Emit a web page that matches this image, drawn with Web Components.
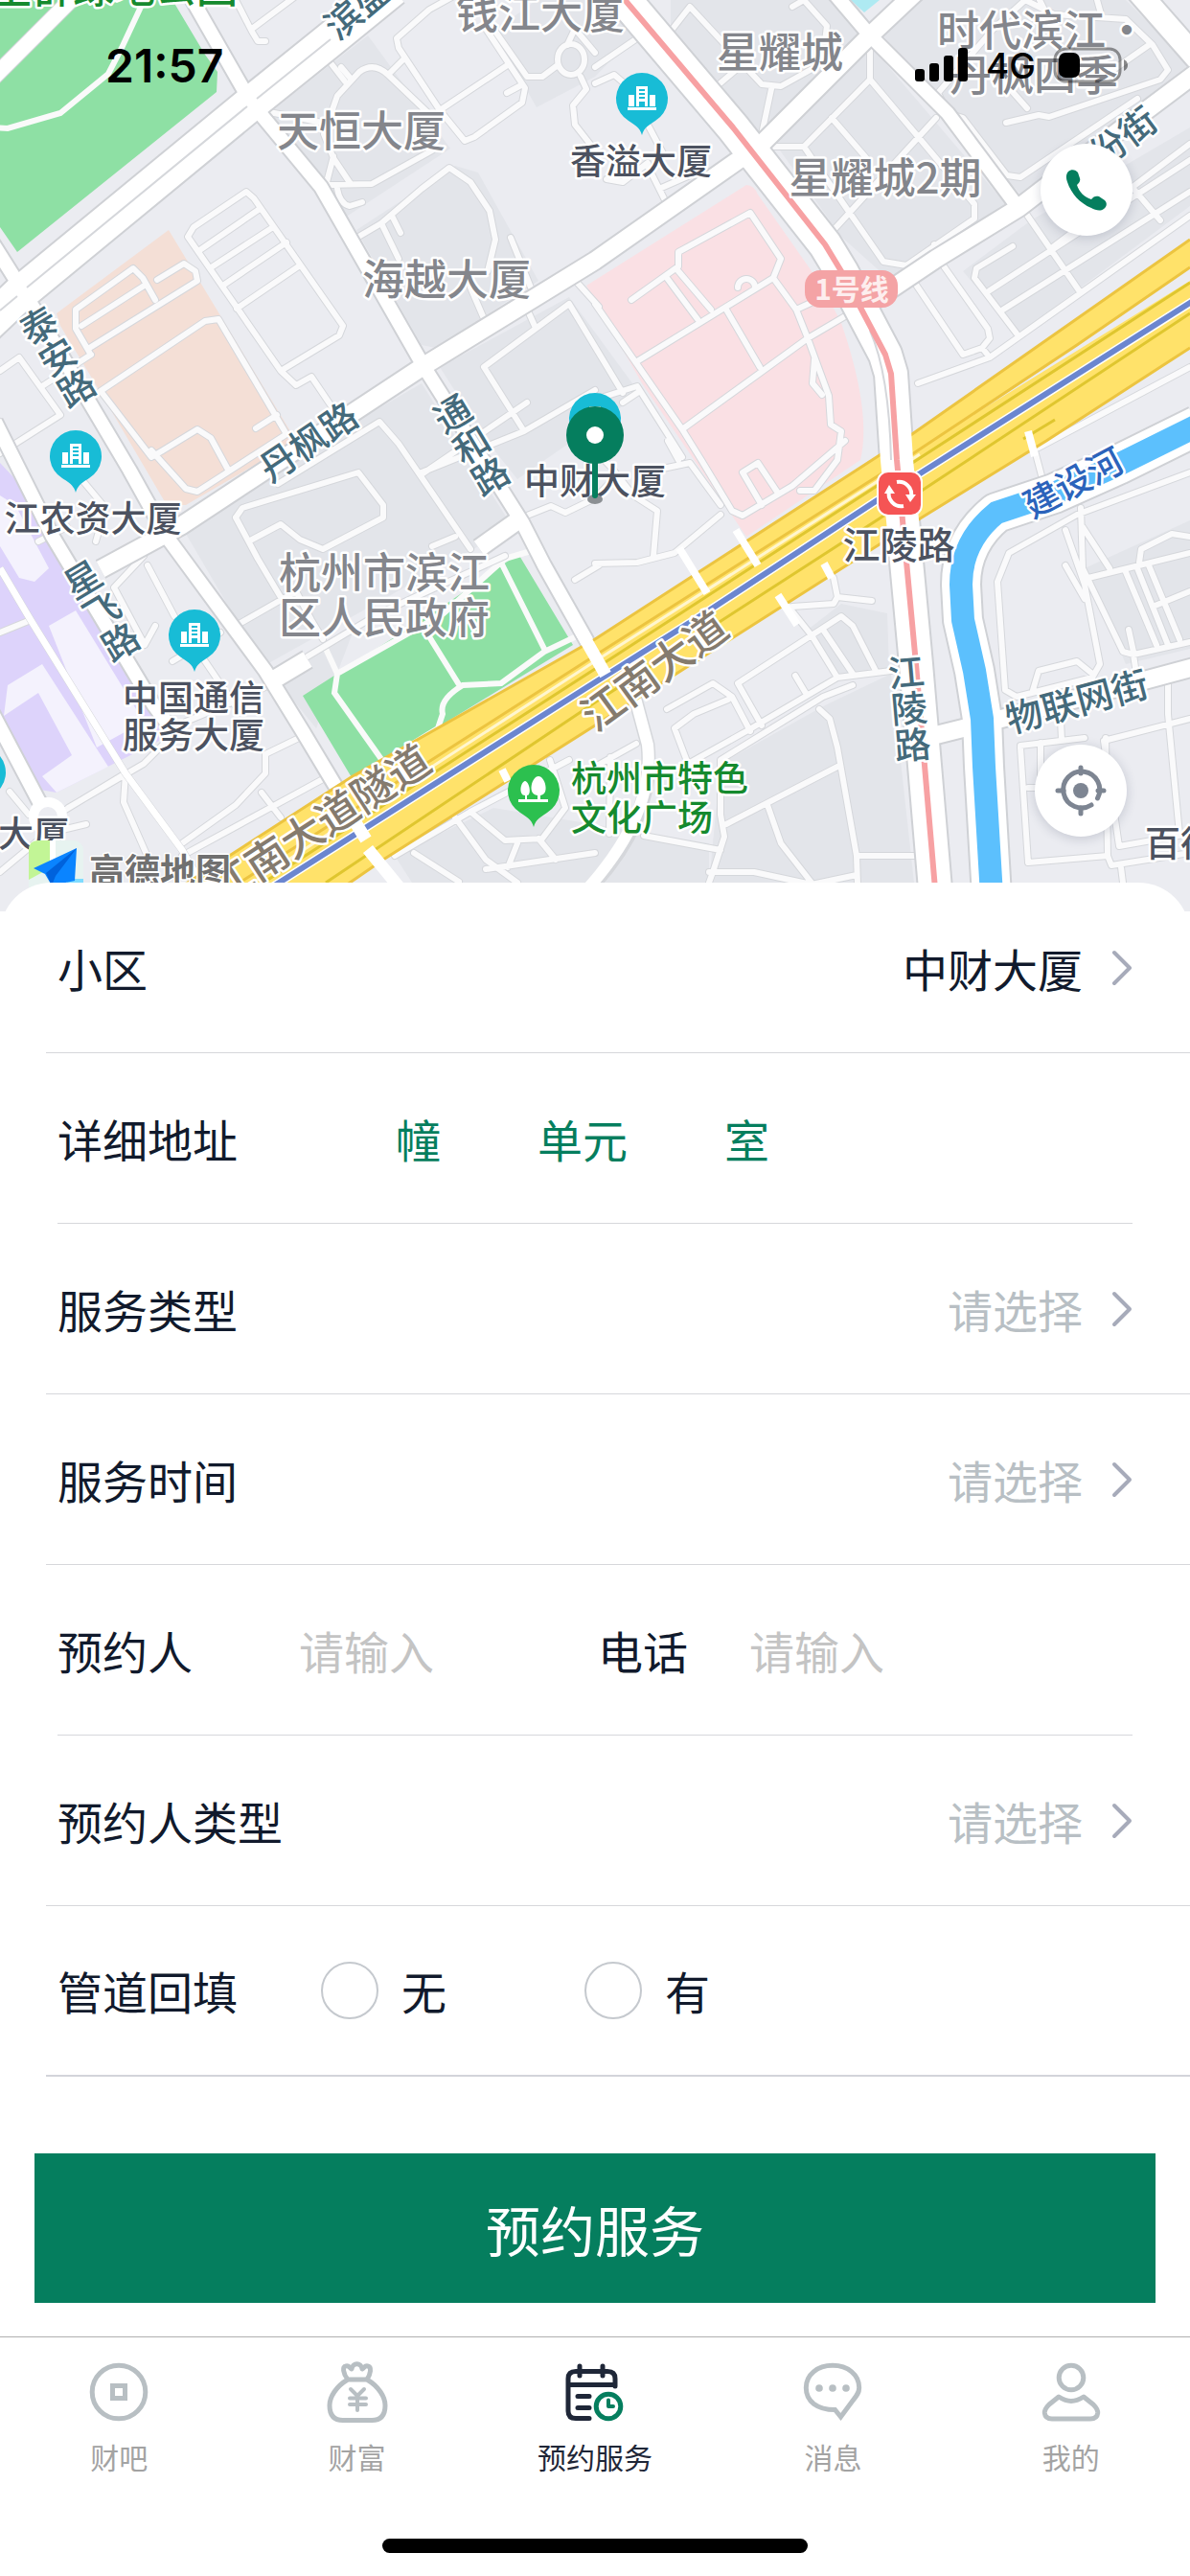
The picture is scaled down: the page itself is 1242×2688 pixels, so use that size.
<!DOCTYPE html>
<html lang="zh-CN">
<head>
<meta charset="utf-8">
<meta name="viewport" content="width=device-width, initial-scale=1">
<title>预约服务</title>
<style>
body {
    margin: 0;
    background: #fff;
    color: #111a2c;
    font-family: "Noto Sans CJK SC", sans-serif;
}
</style>
</head>
<body>
<booking-page></booking-page>

<template id="map-template">
<style>
:host {
    display: block;
    position: relative;
    aspect-ratio: 1242 / 951;
    overflow: hidden;
    background: #ebecf1;
}
.map {
    display: block;
    width: 100%;
    height: 100%;
}
.map text {
    font-weight: 500;
    text-anchor: middle;
    paint-order: stroke;
    stroke: #fff;
    stroke-width: 5px;
    stroke-linejoin: round;
}
.map .area { font-size: 44px; fill: #84868c; }
.map .poi { font-size: 37px; fill: #4c5260; }
.map .station { font-size: 39px; fill: #4c5260; }
.map .road { font-size: 38px; fill: #446a7b; }
.map .down { writing-mode: vertical-rl; }
.map .avenue { font-size: 44px; fill: #857b6e; }
.map .water { font-size: 37px; fill: #2b63bb; }
.map .park { font-size: 37px; fill: #158a2e; }
.map .start { text-anchor: start; }
.map .line { font-size: 30px; font-weight: 700; fill: #fdeeee; stroke: none; }
.map .brand { font-size: 37px; font-weight: 700; fill: #707070; stroke-width: 3px; }
.round {
    position: absolute;
    right: 60px;
    display: grid;
    place-items: center;
    width: 96px;
    height: 96px;
    padding: 0;
    border: 0;
    border-radius: 50%;
    background: #fff;
    box-shadow: 0 2px 12px rgba(40, 50, 80, .2);
}
.call { top: 150px; }
.locate { bottom: 78px; right: 66px; }
</style>
<svg class="map" viewBox="0 0 1242 951" preserveAspectRatio="xMidYMin slice" role="img" aria-label="地图">
    <defs>
        <path id="small" fill="none" stroke-linejoin="round" stroke-linecap="round" d="
            M246,0 L263,33 269,43 277,43 M263,30 L310,-5 M343,63 L360,85 M447,118 L405,78 Q390,64 375,75 L352,100 338,140 348,165 366,192
            M337,193 L388,192 451,157 M348,163 L341,190 331,197 M352,197 Q355,213 365,215 L378,211 M281,117 L337,128
            M459,115 L416,50 414,40 448,10 475,-5 M406,77 L421,62 M459,115 L531,67 M507,30 L548,92 545,107 495,143 485,147 459,115 M529,97 L542,90
            M366,82 L356,70 M515,30 L550,80 566,80 582,68 M582,62 a14,16 0 1 0 28,0 a14,16 0 1 0 -28,0 M606,80 L612,93 598,110 600,130 618,153 M592,47 L600,30 621,55
            M364,253 L398,233 440,197 469,175 491,190 511,220 517,250 509,283 M398,233 L416,270 M410,227 L418,243 M491,300 L507,337 M533,248 L554,300
            M293,387 L196,247 202,237 257,200 265,207 358,340 354,350 293,387 309,402 325,393 348,427 M210,260 L271,218 M222,278 L285,237 M234,297 L299,253 M247,322 L313,277
            M93,367 L79,343 79,323 139,280 149,290 162,313 M85,340 L152,297 M95,362 L206,293 204,283 192,275 164,292 M105,408 L214,335 228,333 299,453
            M105,408 L158,477 170,470 206,448 220,457 238,490 M158,470 L194,510 206,513 299,453 M267,447 L289,433 M44,403 L95,370
            M0,387 L20,373 63,433 0,473 M0,440 L20,480 M549,320 L558,340 M505,383 L594,317 650,410 M505,383 L547,450 M440,493 L547,450 621,407
            M598,290 L625,320 M290,505 L396,440 416,463 491,573 M246,540 L253,530 374,493 400,527 400,540 337,573 313,563 293,547 L263,563
            M246,540 L269,583 297,630 M246,653 L309,617 325,647 337,667 M451,570 L475,560 M321,685 L396,640 527,580 M440,495 L550,420
            M150,580 L119,613 151,673 162,653 M154,590 L182,643 M214,690 L246,737 M71,843 L150,797 194,753 242,733 285,713 M230,660 L180,690
            M277,787 L277,807 246,840 190,880 M277,787 L312,770 M273,827 L293,853 M190,893 L337,813 M131,807 L129,837 166,921 M0,910 L48,870 90,860 M60,850 L131,807 M10,826 L30,850
            M545,540 L575,528 590,535 621,520 640,500 M600,605 L625,590 M85,500 L110,530 100,565 M40,565 L70,550
            M696,213 L676,173 M633,187 L650,190 676,170 M676,130 L692,160 M688,197 L720,183 M621,87 L641,78 655,90 M621,70 L665,40
            M702,30 L720,7 795,88 815,90 851,70 M748,90 L768,73 M795,140 L805,93 M827,7 L839,0 863,27 861,43
            M908,43 L908,83 839,153 807,153 M908,83 L956,140 1017,213 1017,228 946,277 922,273 839,153 M977,123 L870,240 M868,123 L906,167 M975,255 L981,273
            M989,118 L1005,123 1051,183 1065,185 1187,103 M989,118 L979,97 1037,30 1070,0 1100,15 1175,20 1203,47 1219,73 1211,83 1095,122 1084,120 1050,128 M1072,113 L1049,87 M1156,77 L1199,47
            M1085,0 L1095,20 M1145,0 L1150,18 M956,297 L1005,370 1025,363 1033,353 1031,343 983,275 M1025,363 L1033,373 M958,400 L1033,373 1242,225 M1061,348 L1017,290 1019,280 1057,257
            M1069,220 L1126,303 M1033,303 L1242,167 M1047,323 L1242,200 M1096,260 L1242,150 M1183,197 L1211,230
            M659,313 L708,278 708,263 783,222 815,270 807,290 665,377 M696,290 L728,333 M708,283 L742,323 M621,317 L712,448 732,480 764,533 775,538 827,507 882,460 M758,323 L793,383
            M712,448 L843,353 882,330 M807,290 L831,323 843,353 865,413 867,443 878,450 874,480 850,512 835,512 M831,323 L870,305 M775,493 L791,483 811,513 M775,493 L795,527
            M850,375 L848,400 858,412 M770,300 a9,9 0 1 1 18,0 M621,417 L665,403 712,477 M650,420 L665,410 M697,460 L708,480
            M621,588 L665,587 704,577 752,537 M661,517 L686,533 682,580 M621,470 L640,490 661,517 M687,490 L720,483 752,527
            M1084,467 L1242,383 M1076,455 L1088,500 M1242,493 L1124,537 1053,577 1041,607 1049,720 1061,727 1140,707 1148,693 1132,610 1112,553 M1128,530 L1130,593 1172,680 1183,683 1242,670
            M1136,603 L1242,577 M1130,550 L1158,593 M1175,597 L1207,673 M1187,593 L1219,673 M1199,590 L1231,667 M1203,633 L1242,617 M1189,587 L1191,573 1223,557 1242,560 M1078,720 L1084,700 1124,690 1140,703
            M1112,590 L1132,625 M1183,683 L1187,710 M1178,657 L1183,680 M1065,780 L1073,900 1156,893 1154,770 M1065,778 L1132,770 M1086,775 L1086,810 M1073,822 L1090,822 M1242,750 L1152,773 1168,883 1242,870
            M1156,893 L1160,903 1242,890 M1170,905 L1172,921 M1219,710 L1219,745 1231,870 M1107,750 L1108,772
            M815,623 L847,663 874,707 930,700 M827,633 L870,630 874,623 910,627 M870,603 L874,623 M847,663 L878,643 890,653 914,700 M859,657 L890,703 M847,663 L770,713 795,757
            M830,705 L842,725 M696,740 L744,713 764,727 783,763 M874,707 L779,763 718,797 704,760 724,745 760,730 M890,715 L859,727 752,793 752,850 756,873 744,910 740,921
            M855,740 L866,750 874,780 894,893 896,951 M874,800 L758,860 M801,840 L815,880 847,921 M672,872 L752,887 M894,893 L958,893 M740,910 L787,910 847,923 894,913
            M412,893 L491,847 594,793 M475,853 L507,897 540,921 M491,847 L527,877 566,875 590,843 574,793 M432,890 L479,920 M507,907 L621,890 M540,880 L530,905 M562,875 L580,897
            M621,800 L664,776 M637,790 L636,870 M0,660 L32,647"/>
        <path id="medium" fill="none" stroke-linejoin="round" d="
            M195,-10 L262,107 335,195 442,382 545,545 568,590 612,668 630,706 M-10,250 L36,323 135,490 174,560 277,700 317,765 350,820
            M-5,440 L55,560 160,735 180,762 M-10,740 L48,850 M868,-10 L908,37 989,118 1063,217"/>
        <path id="large" fill="none" stroke-linejoin="round" d="
            M960,-12 L908,37 795,150 621,272 442,382 190,548 105,594 M895,325 L977,270 1063,217 1150,150 1250,75 M281,712 L321,688 M500,572 L545,540 M965,770 L1053,748 1250,695"/>
        <path id="metro" fill="none" stroke-linejoin="round" d="M648,-5 L765,133 861,255 878,283 924,370 930,390 936,480 942,543 956,693 978,951"/>
        <path id="river" fill="none" stroke-linejoin="round" d="M1250,444 L1167,485 1100,515 1040,535 Q1003,565 1003,610 L1005,647 1017,700 1025,750 1027,800 1036,951"/>
        <g id="tower-pin">
            <path fill="#18bcd6" d="M0,38 C-2,30 -8,27 -14,23 A27,27 0 1 1 14,23 C8,27 2,30 0,38z"/>
            <path fill="#fff" d="M-15,9h30v3h-30z M-14,-4h6v12h-6z M8,-4h6v12h-6z M-6,-13h12v21h-3v-5h-6v5h-3z"/>
            <path stroke="#18bcd6" stroke-width="2" d="M-3,-9h6M-3,-5h6M-3,-1h6"/>
        </g>
    </defs>

    <!-- blocks -->
    <g fill="#e3e5ea">
        <path d="M384,37 L470,155 360,227 281,117z M372,240 L475,173 499,180 562,293 455,363 440,360z M459,383 L594,310 660,400 655,420 540,500 508,460z"/>
        <path d="M194,557 L368,442 440,400 535,550 275,695z M515,33 L560,0 640,0 665,35 621,80 560,112z M700,0 H894 L906,33 795,143 700,30z"/>
        <path d="M807,147 L908,47 1053,217 934,297 878,247z M918,33 L958,0 H1175 L1242,67 1065,203z M1005,283 L1076,230 1242,133 V215 L1061,350z"/>
        <path d="M752,797 L859,737 930,703 954,921 H740z M843,657 L878,630 926,640 928,700 874,707z M1132,593 L1242,543 V677 L1175,693z M412,893 L515,843 740,880 V921 H430z M285,705 L370,655 330,760z"/>
    </g>
    <path fill="#aeeaf2" d="M888,0 L902,13 918,0z"/>
    <path fill="#f4dfd6" d="M176,240 L309,460 194,527 H174 L107,413 63,340 59,327z"/>
    <path fill="#fae0e4" d="M779,193 Q787,193 791,203 L859,300 878,337 Q910,430 898,480 L779,560 670,400 612,298z"/>
    <path fill="#ddd3fb" d="M0,483 L16,500 44,553 95,633 135,700 166,757 166,773 59,827 36,823 0,760z"/>
    <path fill="#f4f2fd" d="M0,517 L16,527 51,593 36,607 20,603 0,570z M51,653 L79,637 150,753 101,780z M8,715 L44,693 113,800 59,827 44,810 75,788 40,723 4,747z"/>
    <path fill="#8ee0a4" d="M0,0 H180 L214,57 227,75 226,96 18,263 0,237z M541,578 L598,673 368,813 316,726 463,632z"/>
    <path fill="none" stroke="#d2d4d8" stroke-width="18" d="M84,-10 L-10,84"/>
    <path fill="none" stroke="#fff" stroke-width="16" d="M84,-10 L-10,84"/>
    <path fill="none" stroke="#fafafa" stroke-width="6" d="M148,5 L127,50 113,77 63,118 8,134 -5,133 M523,587 L568,677 M610,660 L568,680 523,713 483,715 Q458,730 462,745 L457,760 400,795 349,723 352,703 463,640 527,583 554,575 M444,658 L480,716 M340,677 L352,703"/>

    <!-- streets: grey casing first, white on top -->
    <use href="#small" stroke="#d5d7db" stroke-width="8"/>
    <use href="#small" stroke="#fafafb" stroke-width="6"/>
    <path fill="none" stroke="#d5d7db" stroke-width="8" d="M0,593 L32,647 131,807 190,887 212,925"/>
    <path fill="none" stroke="#fff" stroke-width="7" d="M0,593 L32,647 131,807 190,887 212,925"/>
    <use href="#medium" stroke="#cfd1d5" stroke-width="18"/>
    <use href="#large" stroke="#cfd1d5" stroke-width="22"/>
    <path fill="none" stroke="#cfd1d5" stroke-width="40" d="M410,-12 L340,45 263,107 20,307 -20,345"/>
    <path fill="none" stroke="#cfd1d5" stroke-width="27" d="M1185,-12 L1250,62"/>
    <use href="#metro" stroke="#cfd1d5" stroke-width="38"/>
    <use href="#river" stroke="#cfd1d5" stroke-width="44"/>
    <path fill="none" stroke="#fff" stroke-width="23" d="M1185,-12 L1250,62"/>
    <use href="#medium" stroke="#fff" stroke-width="14"/>
    <path fill="none" stroke="#fff" stroke-width="36" d="M410,-12 L340,45 263,107 20,307 -20,345"/>
    <path fill="none" stroke="#d5d7db" stroke-width="2" d="M345,41 L268,103 M258,111 L28,300 M18,309 L0,324"/>
    <use href="#river" stroke="#fff" stroke-width="40"/>
    <use href="#large" stroke="#fff" stroke-width="18"/>
    <use href="#river" stroke="#5cc0fd" stroke-width="24"/>
    <circle cx="50" cy="852" r="15" fill="#ebecf1" stroke="#fff" stroke-width="10"/>
    <path fill="none" stroke="#d5d7db" stroke-width="15" d="M662,725 L676,777 Q684,850 621,921"/>
    <path fill="none" stroke="#fff" stroke-width="12" d="M662,725 L676,777 Q684,850 610,931"/>

    <!-- 江南大道 and its tunnel -->
    <path fill="#ffe26a" d="M185,928 L368,810 621,667 952,453 1242,250 V363 L1092,460 962,540 621,757 400,897 355,928z"/>
    <path fill="#ebecf1" d="M1242,279 L1124,360 975,458 1242,293z"/>
    <path fill="none" stroke="#ecc440" stroke-width="3" d="M185,928 L368,810 621,667 952,453 1242,250 M1242,363 L1092,460 962,540 621,757 400,897 355,928 M1242,279 L1124,360 952,474 621,684 250,921"/>
    <path fill="none" stroke="#fff6cf" stroke-width="3" d="M960,474 L621,690 264,921"/>
    <path fill="none" stroke="#dfc62f" stroke-width="3" d="M1242,295 L960,478 621,698 275,921 M1242,327 L918,541 740,656 621,733 340,921 M1101,438 L1068,458"/>
    <path fill="none" stroke="#fff" stroke-width="9" d="M285,925 L621,712 740,637 914,523 962,493 1250,311"/>
    <path fill="none" stroke="#6b86cf" stroke-width="6" d="M285,925 L621,712 740,637 914,523 962,493 1250,311"/>
    <path fill="none" stroke="#fff" stroke-width="8" d="M709,572 L738,619 M768,553 L791,590 M860,588 L868,603 M812,621 L832,652 M1073,450 L1080,476 M524,803 L530,815"/>
    <path fill="none" stroke="#fff" stroke-width="13" d="M604,655 L632,704 M372,860 L382,876 M384,886 L420,930"/>

    <use href="#metro" stroke="#fff" stroke-width="34"/>
    <path fill="none" stroke="#d5d7db" stroke-width="2" d="M908,345 Q928,390 930,480"/>
    <use href="#metro" stroke="#f7a1a3" stroke-width="6"/>
    <rect x="840" y="282" width="97" height="39" rx="16" fill="#f4a3a5"/>
    <text class="line" x="889" y="313">1号线</text>

    <!-- area names -->
    <text class="area" x="564" y="30">钱江大厦</text>
    <text class="area" x="377" y="153">天恒大厦</text>
    <text class="area" x="466" y="308">海越大厦</text>
    <text class="area" x="814" y="71">星耀城</text>
    <text class="area" x="924" y="202">星耀城2期</text>
    <text class="area start" x="978" y="48">时代滨江·</text>
    <text class="area" x="1079" y="95">丹枫四季</text>
    <text class="area" x="401" y="614">杭州市滨江</text>
    <text class="area" x="401" y="661">区人民政府</text>
    <text class="park" style="font-size: 43px; text-anchor: end" x="248" y="3">生群绿地公园</text>

    <!-- street names -->
    <text class="road" transform="translate(373 8) rotate(-40)" y="14">滨盛</text>
    <text class="road" transform="translate(1172 143) rotate(-37)" y="14">份街</text>
    <text class="road" transform="translate(322 461) rotate(-34)" y="14">丹枫路</text>
    <text class="road" transform="translate(1124 732) rotate(-15)" y="14">物联网街</text>
    <text class="road down" transform="translate(60 372) rotate(-31)">泰安路</text>
    <text class="road down" transform="translate(492 464) rotate(-31)">通和路</text>
    <text class="road down" transform="translate(106 637) rotate(-31)">星飞路</text>
    <text class="road down" transform="translate(949 739) rotate(-5)">江陵路</text>
    <text class="avenue" transform="translate(683 700) rotate(-36)" y="16">江南大道</text>
    <text class="avenue" transform="translate(334 860) rotate(-33)" y="16">江南大道隧道</text>
    <text class="water" transform="translate(1120 503) rotate(-28)" y="14">建设河</text>

    <!-- points of interest -->
    <use href="#tower-pin" x="670" y="103"/>
    <use href="#tower-pin" x="79" y="476"/>
    <use href="#tower-pin" x="203" y="663"/>
    <use href="#tower-pin" x="-21" y="806"/>
    <use href="#tower-pin" x="621" y="437"/>
    <text class="poi" x="669" y="182">香溢大厦</text>
    <text class="poi" x="97" y="555">江农资大厦</text>
    <text class="poi" x="202" y="742">中国通信</text>
    <text class="poi" x="202" y="781">服务大厦</text>
    <text class="poi" x="621" y="516">中财大厦</text>
    <text class="poi" x="35" y="884">大厦</text>
    <text class="poi start" x="1195" y="894">百德</text>
    <g transform="translate(557 825)">
        <path fill="#2cc04f" d="M0,38 C-2,30 -8,27 -14,23 A27,27 0 1 1 14,23 C8,27 2,30 0,38z"/>
        <path fill="#fff" d="M-16,9h31v3h-31z M-9,9v-4c-7,0 -5,-14 0,-15c5,1 7,15 2,15v4z M4,9v-4c-11,-1 -6,-20 1,-20c7,0 12,19 2,20v4z"/>
    </g>
    <text class="park start" x="596" y="826">杭州市特色</text>
    <text class="park start" x="596" y="867">文化广场</text>
    <g transform="translate(939 515)">
        <rect x="-23" y="-23" width="46" height="46" rx="11" fill="#f55454" stroke="#fff" stroke-width="2"/>
        <g fill="none" stroke="#fff" stroke-width="4">
            <path d="M-3,-12 A13,13 0 0 1 12,3"/><path d="M4,13 A13,13 0 0 1 -11,-3"/>
        </g>
        <path fill="#fff" d="M6,1h11l-6,8z M-16,0h11l-6,-9z"/>
    </g>
    <text class="station" x="938" y="583">江陵路</text>

    <!-- the chosen spot -->
    <ellipse cx="621" cy="521" rx="8" ry="5" fill="#8b8f93"/>
    <path stroke="#057e5e" stroke-width="6" stroke-linecap="round" d="M621,470 V517"/>
    <circle cx="621" cy="454" r="30" fill="#057e5e"/>
    <circle cx="621" cy="454" r="9" fill="#fff"/>

    <!-- map provider -->
    <g>
        <rect x="30" y="877" width="57" height="57" rx="10" fill="#e7f3f0"/>
        <path fill="#c2f596" d="M40,877 H52 V906 L30,918 V887 Q30,877 40,877z"/>
        <path fill="#fff" d="M52,877h6v28l-6,4z"/>
        <path fill="#7fdcff" d="M70,917h17v5h-17z"/>
        <path fill="#0a84ff" d="M80,885 L35,906 47,912 54,924 78,919z"/>
        <path fill="#0062dc" d="M80,885 L48,911 54,924 58,914z"/>
    </g>
    <text class="brand start" x="93" y="923">高德地图</text>
</svg>
<button class="round call" type="button" aria-label="电话">
    <svg width="44" height="44" viewBox="0 0 44 44"><path fill="#057e5e" d="M3,3 C6,0 11,1 13,4 L15,10 C16,13 14,15 12,17 C14,24 20,30 27,32 C29,29 32,28 35,29 L41,33 C44,36 43,40 40,42 C36,45 31,43 27,41 C15,36 6,26 2,14 C0,9 1,5 3,3z"/></svg>
</button>
<button class="round locate" type="button" aria-label="定位">
    <svg width="54" height="54" viewBox="0 0 54 54" fill="none" stroke="#7d8592" stroke-width="5" stroke-linecap="round"><path d="M44.500,35 A19,19 0 1 0 38,42"/><path d="M27,3v6M27,45v6M3,27h6M45,27h6"/><circle cx="27" cy="27" r="8" fill="#7d8592" stroke="none"/></svg>
</button>
</template>

<template id="status-template">
<style>
:host {
    display: flex;
    justify-content: space-between;
    align-items: center;
    height: 72px;
    padding: 32px 64px 0 110px;
    color: #000;
    font-family: Inter, sans-serif;
}
time { font-size: 48px; font-weight: 600; }
.right { display: flex; align-items: center; gap: 18px; }
.net { font-size: 37px; font-weight: 500; }
</style>
<time>21:57</time>
<div class="right">
    <svg width="56" height="36" viewBox="0 0 56 36"><rect y="22" width="10" height="13" rx="3"/><rect x="15" y="16" width="10" height="19" rx="3"/><rect x="30" y="8" width="10" height="27" rx="3"/><rect x="45" width="10" height="35" rx="3"/></svg>
    <span class="net">4G</span>
    <svg width="79" height="38" viewBox="0 0 79 38"><rect x="2" y="2" width="68" height="34" rx="11" fill="none" stroke="#000" stroke-opacity=".4" stroke-width="3"/><rect x="6" y="6" width="22" height="26" rx="7"/><path fill-opacity=".45" d="M74,13 q4,2 4,6 t-4,6z"/></svg>
</div>
</template>

<template id="row-template">
<style>
:host {
    display: flex;
    align-items: center;
    box-sizing: border-box;
    height: 178px;
    margin-left: 48px;
    padding: 0 60px 0 12px;
    border-bottom: 1px solid #d6d7db;
    font-size: 47px;
    line-height: 64px;
}
:host([inset]) {
    margin-right: 60px;
    margin-left: 60px;
    padding: 0;
}
:host([last]) { border-bottom: 2px solid #d3d4da; }
</style>
<slot></slot>
</template>

<template id="select-template">
<style>
:host {
    flex: 1;
    display: flex;
    align-items: center;
    gap: 30px;
}
label { flex: none; }
select {
    flex: 1;
    min-width: 0;
    padding: 0;
    border: 0;
    appearance: none;
    background: none;
    color: #b8bfc4;
    font: inherit;
    text-align: right;
    text-align-last: right;
}
:host([chosen]) select { color: #111a2c; }
svg { flex: none; }
</style>
<label for="field"></label>
<select id="field"><option></option></select>
<svg width="22" height="38" viewBox="0 0 22 38" fill="none" stroke="#a7abba" stroke-width="4" stroke-linecap="round" stroke-linejoin="round"><path d="M3,3 L19,19 3,35"/></svg>
</template>

<template id="form-template">
<style>
:host {
    display: block;
    position: relative;
    margin-top: -30px;
    border-radius: 54px 54px 0 0;
    background: #fff;
}
form { margin: 0; }
.name { min-width: 188px; margin-right: 64px; }
.tail { margin-right: 64px; }
.unit { color: #057e5e; }
input { font: inherit; color: inherit; }
input[type="text"], input[type="tel"] {
    box-sizing: border-box;
    width: 101px;
    padding: 0;
    border: 0;
    background: none;
}
input.person { width: 312px; }
input::placeholder { color: #c4c4c4; opacity: 1; }
.choice {
    display: flex;
    align-items: center;
    gap: 24px;
    margin-left: 23px;
    margin-right: 121px;
}
input[type="radio"] {
    box-sizing: border-box;
    width: 60px;
    height: 60px;
    margin: 0;
    border: 2px solid #c5c9ce;
    border-radius: 50%;
    appearance: none;
}
input[type="radio"]:checked { border: 16px solid #057e5e; }
.submit {
    padding: 80px 36px 35px;
}
.submit button {
    display: block;
    width: 100%;
    height: 156px;
    padding: 0;
    border: 0;
    background: #057e5e;
    color: #fff;
    font-family: inherit;
    font-size: 57px;
}
</style>
<form>
    <form-row><select-field label="小区" value="中财大厦" chosen></select-field></form-row>
    <form-row inset>
        <span class="name">详细地址</span>
        <input type="text" id="building"><label class="unit" for="building">幢</label>
        <input type="text" id="unit"><label class="unit" for="unit">单元</label>
        <input type="text" id="room"><label class="unit" for="room">室</label>
    </form-row>
    <form-row><select-field label="服务类型" value="请选择"></select-field></form-row>
    <form-row><select-field label="服务时间" value="请选择"></select-field></form-row>
    <form-row inset>
        <label class="name" for="person">预约人</label>
        <input class="person" type="text" id="person" placeholder="请输入">
        <label class="tail" for="phone">电话</label>
        <input class="person" type="tel" id="phone" placeholder="请输入">
    </form-row>
    <form-row><select-field label="预约人类型" value="请选择"></select-field></form-row>
    <form-row last>
        <span class="name">管道回填</span>
        <label class="choice"><input type="radio" name="backfill" value="0">无</label>
        <label class="choice"><input type="radio" name="backfill" value="1">有</label>
    </form-row>
    <div class="submit"><button type="button">预约服务</button></div>
</form>
</template>

<template id="tab-template">
<style>
:host { display: block; flex: 1; }
a {
    display: flex;
    flex-direction: column;
    align-items: center;
    gap: 16px;
    color: #a3a3a3;
    font-size: 30px;
    line-height: 42px;
    text-decoration: none;
}
:host([active]) a { color: #1f2738; }
::slotted(svg) {
    width: 60px;
    height: 60px;
    overflow: visible;
    fill: none;
    stroke: #b8bfc3;
    stroke-width: 5px;
    stroke-linejoin: round;
    stroke-linecap: round;
}
:host([active]) ::slotted(svg) { stroke: #1f2738; }
</style>
<a href="#"><slot name="icon"></slot><span><slot></slot></span></a>
</template>

<template id="tabs-template">
<style>
:host {
    display: block;
    border-top: 1px solid #b0b0b0;
    background: #fff;
}
nav {
    display: flex;
    padding-top: 27px;
}
.home {
    width: 444px;
    height: 15px;
    margin: 65px auto 24px;
    border-radius: 8px;
    background: #000;
}
</style>
<nav>
    <tab-item>
        <svg slot="icon" viewBox="0 0 60 60"><circle cx="30" cy="30" r="27.800"/><path stroke-linejoin="miter" d="M23.500,23.500h13v13h-13z"/></svg>财吧
    </tab-item>
    <tab-item>
        <svg slot="icon" viewBox="0 0 60 60"><path d="M20,17 H40 C52,24 59,35 59,44 Q59,59.500 45,59.500 H15 Q1,59.500 1,44 C1,35 8,24 20,17 C15,11 14,3 18,3 C21,2 22,5 24,6 C25,-1 34,-1 35,6 C37,5 38,2 41,3 C45,4 44,11 40,17"/><path stroke-width="4" d="M23,27 L30,34 37,27 M22,36.500h17 M22,43h17 M30,34v15"/></svg>财富
    </tab-item>
    <tab-item active>
        <svg slot="icon" viewBox="0 0 60 60"><path d="M24,57.500 H10 Q2,57.500 2,50 V16 Q2,8.500 10,8.500 H43 Q51,8.500 51,16 V24 M2,22.500 H51 M14,3 V13 M38,3 V13 M12,34.500 H24 M12,46.500 H24"/><g stroke="#057e5e"><circle cx="44" cy="45" r="12.800"/><path stroke-width="4" d="M44,38.500 V45 H49"/></g></svg>预约服务
    </tab-item>
    <tab-item>
        <svg slot="icon" viewBox="0 0 60 60"><path stroke-linejoin="miter" d="M30,2.300 C14,2.300 2.300,12 2.300,25.500 C2.300,40 14,48.500 32.500,48.500 L38.500,56 51,39 C55,34 57.700,31 57.700,25.500 C57.700,12 46,2.300 30,2.300z"/><g fill="#b8bfc3" stroke="none"><circle cx="16" cy="26" r="3.800"/><circle cx="30" cy="26" r="3.800"/><circle cx="44" cy="26" r="3.800"/></g></svg>消息
    </tab-item>
    <tab-item>
        <svg slot="icon" viewBox="0 0 60 60"><circle cx="30" cy="15" r="12.800"/><path d="M17,35 L7,43 Q2,48 2.300,52 Q3,58 10,58 H50 Q57,58 57.700,52 Q58,48 53,43 L43,35 Q36,39.500 30,39.500 Q24,39.500 17,35z"/></svg>我的
    </tab-item>
</nav>
<div class="home"></div>
</template>

<template id="page-template">
<style>
:host {
    display: block;
    position: relative;
}
/* the phone's status bar floats over the map */
status-bar {
    position: absolute;
    top: 0;
    left: 0;
    right: 0;
    z-index: 1;
}
</style>
<status-bar></status-bar>
<map-view></map-view>
<booking-form></booking-form>
<tab-bar></tab-bar>
</template>

<script>
class TemplateElement extends HTMLElement {
    constructor(id) {
        super()
        this.attachShadow({ mode: 'open' })
        .appendChild(document.querySelector(id).content.cloneNode(true))
    }
}

customElements.define('status-bar', class extends TemplateElement {
    constructor() { super('#status-template') }
})

customElements.define('map-view', class extends TemplateElement {
    constructor() { super('#map-template') }
})

customElements.define('form-row', class extends TemplateElement {
    constructor() { super('#row-template') }
})

/**
 * A label with a drop-down on the right.
 * The label and value attributes hold the two texts.
 */
customElements.define('select-field', class extends TemplateElement {
    constructor() { super('#select-template') }

    connectedCallback() {
        this.shadowRoot.querySelector('label').textContent = this.getAttribute('label')
        this.shadowRoot.querySelector('option').textContent = this.getAttribute('value')
    }
})

customElements.define('booking-form', class extends TemplateElement {
    constructor() { super('#form-template') }
})

customElements.define('tab-item', class extends TemplateElement {
    constructor() { super('#tab-template') }
})

customElements.define('tab-bar', class extends TemplateElement {
    constructor() { super('#tabs-template') }
})

customElements.define('booking-page', class extends TemplateElement {
    constructor() { super('#page-template') }
})
</script>
</body>
</html>
